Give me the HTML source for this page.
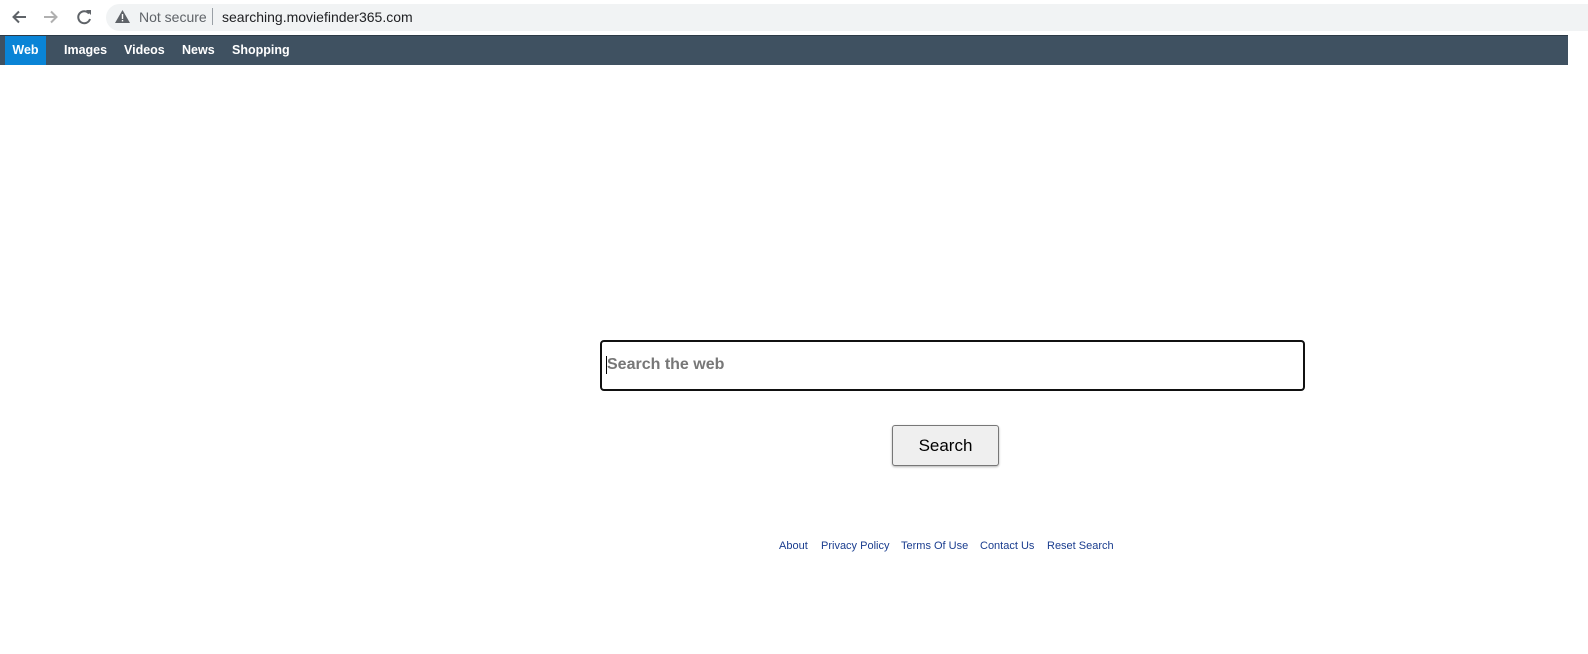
<!DOCTYPE html>
<html><head><meta charset="utf-8"><style>
*{margin:0;padding:0;box-sizing:border-box}
body{width:1588px;height:654px;background:#fff;font-family:"Liberation Sans",Arial,sans-serif;position:relative;overflow:hidden}
.top{position:absolute;left:0;top:0;width:1588px;height:35px;background:#fff}
.omni{position:absolute;left:106px;top:4px;width:1500px;height:27px;background:#f1f3f4;border-radius:14px}
.nav{position:absolute;left:0;top:35px;width:1568px;height:30px;background:#3f5161;border-top:1px solid #2c3a46}
.nav span{position:absolute;top:0;height:29px;line-height:29px;color:#fff;font-weight:bold;font-size:12.5px}
.web{left:5px;width:41px;background:#0a84d6;text-align:center}
.box{position:absolute;left:600px;top:340px;width:705px;height:51px;border:2px solid #111;border-radius:4px}
.ph{position:absolute;left:607px;top:356px;font-size:16px;font-weight:bold;color:#777}
.caret{position:absolute;left:606px;top:356px;width:1px;height:18px;background:#000}
.btn{position:absolute;left:892px;top:425px;width:107px;height:41px;border:1px solid #777;border-radius:3px;background:#efefef;box-shadow:0 1px 2px rgba(0,0,0,.3);font-size:17px;text-align:center;line-height:39px;color:#000}
.links{position:absolute;top:540px;font-size:11px;color:#1a3d8f}
</style></head><body>
<div class="top">
<svg style="position:absolute;left:10px;top:8px" width="90" height="18" viewBox="0 0 90 18">
<path d="M16 9H4M9 3.5L3.5 9 9 14.5" stroke="#5f6368" stroke-width="2" fill="none"/>
<path d="M34 9h12M41 3.5L46.5 9 41 14.5" stroke="#b0b0b0" stroke-width="2" fill="none"/>
<path d="M79 5.5A6 6 0 1 0 80 11" stroke="#5f6368" stroke-width="2" fill="none"/><path d="M76 2h5v5z" fill="#5f6368"/>
</svg>
<div class="omni"></div>
<svg style="position:absolute;left:115px;top:10px" width="15" height="13" viewBox="0 0 15 13"><path d="M7.5 0L15 13H0z" fill="#5f6368"/><rect x="6.8" y="4" width="1.4" height="5" fill="#fff"/><rect x="6.8" y="10" width="1.4" height="1.4" fill="#fff"/></svg>
<div style="position:absolute;left:139px;top:9px;font-size:14px;color:#5f6368">Not secure</div>
<div style="position:absolute;left:212px;top:8px;width:1px;height:17px;background:#9aa0a6"></div>
<div style="position:absolute;left:222px;top:9px;font-size:14px;color:#202124">searching.moviefinder365.com</div>
</div>
<div class="nav">
<span class="web">Web</span><span style="left:64px">Images</span><span style="left:124px">Videos</span><span style="left:182px">News</span><span style="left:232px">Shopping</span>
</div>
<div class="box"></div>
<div class="caret"></div>
<div class="ph">Search the web</div>
<div class="btn">Search</div>
<div class="links" style="left:779px">About</div>
<div class="links" style="left:821px">Privacy Policy</div>
<div class="links" style="left:901px">Terms Of Use</div>
<div class="links" style="left:980px">Contact Us</div>
<div class="links" style="left:1047px">Reset Search</div>
</body></html>
